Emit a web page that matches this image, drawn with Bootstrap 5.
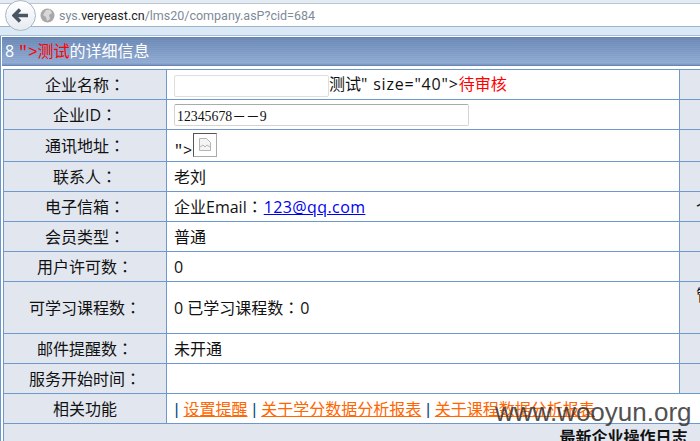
<!DOCTYPE html>
<html lang="zh-CN">
<head>
<meta charset="utf-8">
<title>company</title>
<link href="https://cdn.jsdelivr.net/npm/bootstrap@5.3.0/dist/css/bootstrap.min.css" rel="stylesheet">
<style>
html,body{margin:0;height:441px;overflow:hidden;background:#fff}
body{font-family:"Open Sans","Noto Sans CJK SC",sans-serif;font-size:16px;color:#111;line-height:1.2}
span[lang]{font-family:"Noto Sans CJK TC",sans-serif}
span.colon{letter-spacing:1px}
.chrome{height:36px;background:#dbe9f7;border-bottom:1px solid #a9bdd2;position:relative;overflow:hidden}
.chrome-top{height:4px;background:#e4ebf3;border-bottom:1px solid #b9c6d3}
.addr{height:23px;background:#fff;border-bottom:1px solid #9fb4cb;padding-left:59px;font-family:Roboto,sans-serif;font-size:12.5px;line-height:23px;color:#7d8a97;white-space:nowrap}
.addr b{font-weight:400;color:#222}
.backbtn{position:absolute;left:5px;top:0;width:31px;height:31px;border-radius:50%;background:linear-gradient(#fff,#e6ebf1);border:1px solid #a9b7c6;display:flex;align-items:center;justify-content:center}
.globe{position:absolute;left:40px;top:8px}
.page{position:relative;height:405px;border-left:1px solid #7096c8;padding-left:1px;overflow:hidden}
.headbar{height:29px;margin-top:1px;color:#fff;font-size:16px;line-height:28px;padding-left:3px;white-space:nowrap;
background:repeating-linear-gradient(rgba(255,255,255,0) 0 1px,rgba(255,255,255,.05) 1px 2px),linear-gradient(#5f7fae,#6c8ab7 8%,#7f9cc6 55%,#8eaad2 90%,#5f7fae)}
.headbar em{font-style:normal;color:#f00}
.mono{font-family:"Liberation Mono",monospace}
.headbar .mono{font-size:16px}
td .mono{font-size:15px}
.tblwrap{padding:3px 0 0 1px;width:760px}
.infotbl{width:760px;table-layout:fixed;border-collapse:collapse;border-top:1px solid #6f98cf}
.infotbl td{border:1px solid #6f98cf;padding:2px 7px 0;height:30px;vertical-align:middle;background:#fff;white-space:nowrap;overflow:hidden}
.infotbl td.lab{background:#e2e7ef;text-align:center;padding:2px 0 0}
.infotbl tr.tall td{height:52px}
.infotbl tr.r32 td{height:32px}
.nameinp{display:inline-block;width:155px;height:22px;border:1px solid #dedede;border-radius:2px;vertical-align:middle}
.idinp{display:flex;align-items:center;width:295px;height:22px;margin-top:-2px;border:1px solid #d4d4d4;border-top-color:#aaa;border-radius:2px;padding-left:2px;font:13.8px "Liberation Serif","Noto Sans CJK SC",serif;color:#111}
.red{color:#f00}
.wide{letter-spacing:.8px}
.brokenimg{display:inline-block;width:24px;height:24px;margin-left:1px;border:1px solid #aaa;border-top-color:#555;border-left-color:#555;vertical-align:-2px;padding:4px}
.lnk{color:#0000ee;text-decoration:underline;letter-spacing:.4px}
.orng{color:#f60;text-decoration:underline}
.pipe{color:#0a4a80;font-family:"Liberation Sans",sans-serif;margin:0 .6px}
.mark-wm{position:absolute;left:494px;top:361px;font-family:"Liberation Sans",sans-serif;font-size:26px;color:#333;opacity:.85;white-space:nowrap;line-height:1.2}
.infotbl td.logtitle{font-weight:700;text-align:center;padding:4px 0 0 480px;vertical-align:top}
</style>
</head>
<body>
<div class="chrome">
  <div class="chrome-top"></div>
  <div class="addr">sys.<b>veryeast.cn</b>/lms20/company.asP?cid=684</div>
  <div class="backbtn"><svg width="17" height="15" viewBox="0 0 17 15"><path d="M8 1.500 2 7.500 8 13.500M3 7.500h13" fill="none" stroke="#4a5563" stroke-width="3.400"/></svg></div>
  <svg class="globe" width="15" height="15" viewBox="0 0 15 15"><circle cx="7.500" cy="7.500" r="7" fill="#a8a8a8"/><path d="M6 2 10 1.500 12 5 9 7 10 11 7 13 6 9 3 7Z" fill="#d8d8d8"/></svg>
</div>
<div class="page">
  <div class="headbar">8 <em><span class="mono">"&gt;</span>测试</em>的详细信息</div>
  <div class="tblwrap">
    <table class="infotbl">
      <colgroup><col style="width:163px"><col style="width:513px"><col style="width:84px"></colgroup>
      <tr><td class="lab">企业名称<span lang="zh-TW">：</span></td><td><span class="nameinp"></span>测试<span class="wide">" size="40"&gt;</span><span class="red">待审核</span></td><td class="lab"></td></tr>
      <tr><td class="lab">企业ID<span lang="zh-TW">：</span></td><td><div class="idinp">12345678－－9</div></td><td class="lab"></td></tr>
      <tr class="r32"><td class="lab">通讯地址<span lang="zh-TW">：</span></td><td><span class="mono">"&gt;</span><span class="brokenimg"><svg class="d-block" width="14" height="14" viewBox="0 0 14 14"><path d="M1.500.5h7l4 4v8h-11Z" fill="#f4f4f4" stroke="#b5b5b5"/><path d="M2 9l3-2 2 2 2-2 3 2" fill="none" stroke="#b5b5b5"/></svg></span></td><td class="lab"></td></tr>
      <tr><td class="lab">联系人<span lang="zh-TW">：</span></td><td>老刘</td><td class="lab"></td></tr>
      <tr><td class="lab">电子信箱<span lang="zh-TW">：</span></td><td>企业Email<span class="colon" lang="zh-TW">：</span><span class="lnk">123@qq.com</span></td><td class="lab text-start ps-3">个人Email</td></tr>
      <tr><td class="lab">会员类型<span lang="zh-TW">：</span></td><td>普通</td><td class="lab"></td></tr>
      <tr><td class="lab">用户许可数<span lang="zh-TW">：</span></td><td>0</td><td class="lab"></td></tr>
      <tr class="tall"><td class="lab">可学习课程数<span lang="zh-TW">：</span></td><td>0 已学习课程数<span class="colon" lang="zh-TW">：</span>0</td><td class="lab text-start ps-3 align-top pt-1">管理员</td></tr>
      <tr><td class="lab">邮件提醒数<span lang="zh-TW">：</span></td><td>未开通</td><td class="lab"></td></tr>
      <tr><td class="lab">服务开始时间<span lang="zh-TW">：</span></td><td></td><td class="lab"></td></tr>
      <tr><td class="lab">相关功能</td><td colspan="2"><span class="pipe">|</span> <span class="orng">设置提醒</span> <span class="pipe">|</span> <span class="orng">关于学分数据分析报表</span> <span class="pipe">|</span> <span class="orng">关于课程数据分析报表</span></td></tr>
      <tr class="tall"><td class="lab logtitle" colspan="3">最新企业操作日志</td></tr>
    </table>
  </div>
  <div class="mark-wm">www.wooyun.org</div>
</div>
</body>
</html>
